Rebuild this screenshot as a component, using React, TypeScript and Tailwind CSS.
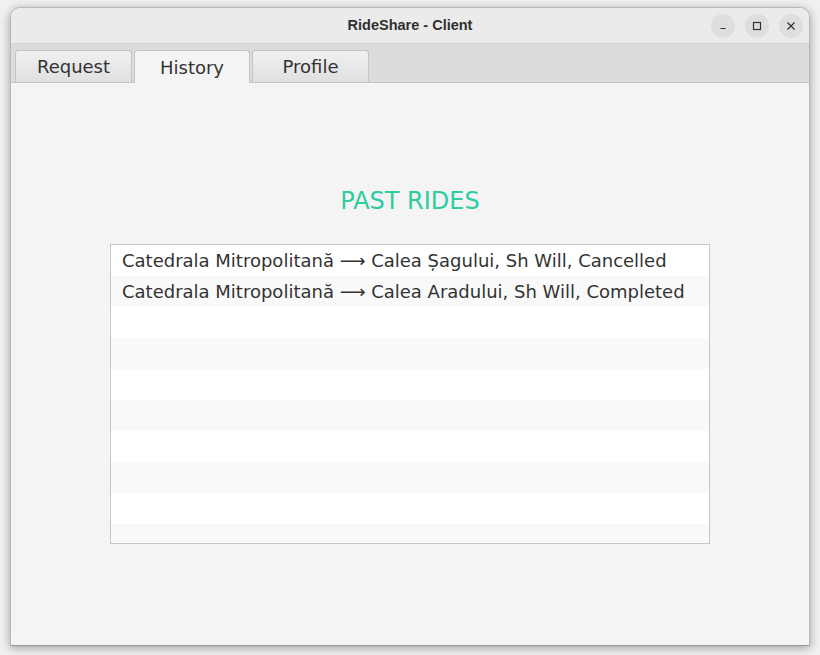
import React from 'react';

const rides = [
  'Catedrala Mitropolitană ⟶ Calea Șagului, Sh Will, Cancelled',
  'Catedrala Mitropolitană ⟶ Calea Aradului, Sh Will, Completed',
];

const tabs = ['Request', 'History', 'Profile'];

function WinButton({ children }: { children: React.ReactNode }) {
  return (
    <div className="w-6 h-6 rounded-full bg-[#dedede] flex items-center justify-center text-[#333]">
      {children}
    </div>
  );
}

export default function App() {
  const rows = Array.from({ length: 10 }, (_, i) => rides[i] ?? '');

  return (
    <div className="w-[820px] h-[655px] bg-[#f0f0f0] pt-[7px] px-[10px] overflow-hidden font-['DejaVu_Sans',sans-serif]">
      <div className="w-[800px] h-[639px] rounded-t-[10px] bg-[#f4f4f4] border border-[#b8b8b8] border-b-[#999] shadow-[0_2px_10px_rgba(0,0,0,0.35)] flex flex-col overflow-hidden">
        {/* title bar */}
        <div className="h-[36px] bg-[#ebebeb] border-b border-[#d4d4d4] relative flex items-center justify-center shrink-0">
          <span className="font-['Liberation_Sans',sans-serif] font-bold text-[14.5px] text-[#303030]">
            RideShare - Client
          </span>
          <div className="absolute right-[6px] top-[6px] flex gap-[10px]">
            <WinButton>
              <svg width="10" height="10" viewBox="0 0 10 10">
                <path d="M2.5 7.5h5" stroke="currentColor" strokeWidth="1.2" />
              </svg>
            </WinButton>
            <WinButton>
              <svg width="10" height="10" viewBox="0 0 10 10">
                <rect x="1.5" y="1.5" width="7" height="7" fill="none" stroke="currentColor" strokeWidth="1.2" />
              </svg>
            </WinButton>
            <WinButton>
              <svg width="10" height="10" viewBox="0 0 10 10">
                <path d="M1.5 1.5l7 7M8.5 1.5l-7 7" stroke="currentColor" strokeWidth="1.3" />
              </svg>
            </WinButton>
          </div>
        </div>

        {/* tab strip */}
        <div className="h-[39px] bg-[#dcdcdc] border-b border-[#c4c4c4] flex items-end gap-[2px] pl-[4px] shrink-0">
          {tabs.map((t) => {
            const active = t === 'History';
            return (
              <div
                key={t}
                className={
                  active
                    ? 'w-[116px] h-[33px] -mb-px bg-[#f4f4f4] border border-b-0 border-[#c4c4c4] rounded-t-[3px] flex items-center justify-center text-[18px] text-[#333]'
                    : 'w-[117px] h-[32px] bg-gradient-to-b from-[#f0f0f0] to-[#e0e0e0] border border-b-0 border-[#c4c4c4] rounded-t-[3px] flex items-center justify-center text-[18px] text-[#333]'
                }
              >
                {t}
              </div>
            );
          })}
        </div>

        {/* content */}
        <div className="flex-1 flex flex-col items-center pt-[106px]">
          <div className="text-[24px] text-[#2ecc9e] leading-none">PAST RIDES</div>
          <div className="mt-[31px] w-[600px] h-[300px] border border-[#c8c8c8] bg-white overflow-hidden">
            {rows.map((r, i) => (
              <div
                key={i}
                className={
                  (i % 2 === 0 ? 'bg-white' : 'bg-[#f9f9f9]') +
                  ' h-[31px] px-[11px] flex items-center text-[18px] text-[#333] whitespace-nowrap'
                }
              >
                {r}
              </div>
            ))}
          </div>
        </div>
      </div>
    </div>
  );
}
